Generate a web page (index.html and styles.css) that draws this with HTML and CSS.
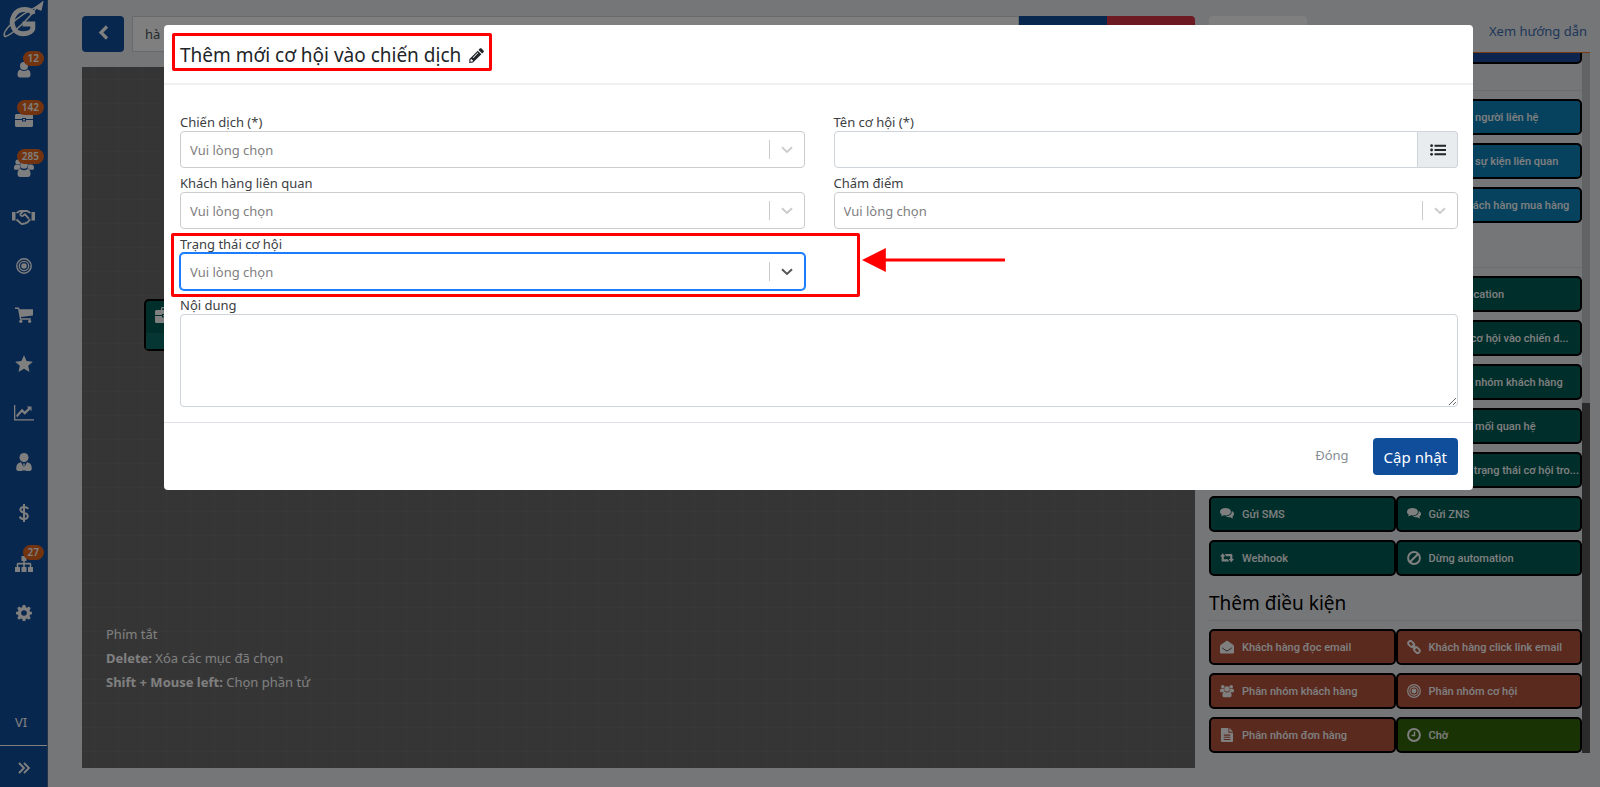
FILE: index.html
```html
<!DOCTYPE html>
<html lang="vi">
<head>
    <meta charset="UTF-8">
    <meta name="viewport" content="width=device-width, initial-scale=1.0">
    <title>Automation</title>
    <link rel="stylesheet" href="styles.css">
</head>
<body>
<svg class="sprite" aria-hidden="true">
    <symbol id="user" viewBox="0 0 16 16"><circle cx="8" cy="4" r="4"/><path d="M4.300 7.500C2.300 8 1.500 10 1.500 12.800c0 1.800 1 2.700 2.500 2.700h8c1.500 0 2.500-.9 2.500-2.700 0-2.800-.8-4.800-2.800-5.300a5.200 5.200 0 0 1-7.400 0z"/></symbol>
    <symbol id="briefcase" viewBox="0 0 18 16"><path d="M6 3V1.500C6 .7 6.500 0 7.500 0h3C11.500 0 12 .7 12 1.500V3h4.500c.8 0 1.500.7 1.500 1.500V8h-7V7H7v1H0V4.500C0 3.700.7 3 1.500 3zm1.300 0h3.400V1.300H7.300zM0 9h7v1.500h4V9h7v5.500c0 .8-.7 1.500-1.500 1.500h-15C.7 16 0 15.300 0 14.500zM8 8h2v1.500H8z"/></symbol>
    <symbol id="users" viewBox="0 0 20 18"><circle cx="4" cy="3" r="2.600"/><circle cx="16" cy="3" r="2.600"/><circle cx="10" cy="6" r="3.800"/><path d="M6 6.200C5 5.800 1.500 5.300.8 6.200.1 7 0 8 0 9.300c0 1 .7 1.500 1.700 1.500h2.600c.6-.8 1.400-1.300 2.300-1.500A4.800 4.800 0 0 1 6 6.200zM14 6.200c1-.4 4.500-.9 5.200 0 .7.800.8 1.800.8 3.100 0 1-.7 1.500-1.700 1.500h-2.600c-.6-.8-1.400-1.300-2.300-1.500.6-.9.800-2 .6-3.100zM6.500 9.700C4.500 10 3.500 12 3.500 15c0 1.900 1 3 2.700 3h7.600c1.700 0 2.700-1.100 2.700-3 0-3-1-5-3-5.300a4.600 4.600 0 0 1-7 0z"/></symbol>
    <symbol id="handshake" viewBox="0 0 23 16"><path d="M0 3h3.500v8.500H0zM19.500 3H23v8.500h-3.500z"/><path d="M4.500 4 8 2h3M4.500 10.500l4.500 4c1 .8 2 .6 2.600 0 1 .5 2 0 2.400-.8 1 .3 2-.3 2.200-1.300l2.300-2M18.500 4 15 2h-3.500L8.500 4.800c-.5 1.500 1 2.800 2.500 2l2-1.500 4 4.500" fill="none" stroke="currentColor" stroke-width="1.800"/></symbol>
    <symbol id="target" viewBox="0 0 16 16"><g fill="none" stroke="currentColor"><circle cx="8" cy="8" r="7.200" stroke-width="1.400"/><circle cx="8" cy="8" r="4.700" stroke-width="1.300"/></g><circle cx="8" cy="8" r="2.800"/></symbol>
    <symbol id="cart" viewBox="0 0 17 16"><path d="M0 1h3.300c.5 0 .7.300.8.800L4.200 2.500H17v6L5.600 10l.2 1H15v1.400H4.700L2.900 2.400H0z"/><circle cx="5.500" cy="14" r="1.500"/><circle cx="13.800" cy="14" r="1.500"/></symbol>
    <symbol id="star" viewBox="0 0 16 16"><path d="m8 .3 2.300 5 5.600.6-4.200 3.700 1.200 5.500L8 12.300l-4.900 2.800 1.200-5.500L.1 5.900l5.600-.6z"/></symbol>
    <symbol id="chart" viewBox="0 0 20 16"><path d="M0 0h1.300v14.300H20v1.300H0z"/><path d="m3 12.500 5-5.500 2.800 2.800L16 4.600l1.500 1.600V1.500h-4.800l1.600 1.600-3.500 3.500L8 3.800l-5.800 6.500z"/></symbol>
    <symbol id="tie" viewBox="0 0 16 18"><circle cx="8" cy="4.500" r="4.500"/><path d="M4 9.500C1.500 10 .2 12 .2 15.500.2 17 1 18 2.500 18h4l.8-4-.8-2L5 9.300zM12 9.500c2.500.500 3.800 2.500 3.800 6 0 1.500-.8 2.500-2.300 2.500h-4l-.8-4 .8-2L11 9.300zM7 10.500h2l-.5 2 .8 4L8 18l-1.300-1.500.8-4z"/></symbol>
    <symbol id="dollar" viewBox="0 0 10 18"><path d="M9 5C8.500 3.500 7 2.900 5 2.900S1.400 4 1.400 5.700C1.400 9.500 8.800 7.800 8.800 12c0 2-1.500 3.100-3.800 3.100S1.200 14.300.8 12.500M5 0v18" fill="none" stroke="currentColor" stroke-width="2"/></symbol>
    <symbol id="sitemap" viewBox="0 0 18 16"><path d="M6.500 0h5v5h-1.700v1.800h5c1 0 1.500.6 1.500 1.500V11H18v5h-5v-5h1.700V8.400H9.800V11h1.700v5h-5v-5h1.700V8.400H3.300V11H5v5H0v-5h1.700V8.300c0-.9.500-1.500 1.500-1.500h5V5H6.500z"/></symbol>
    <symbol id="gear" viewBox="0 0 16 16"><path fill-rule="evenodd" d="M6.700 0h2.600l.5 2.200 1.200.5 2-1.200 1.700 1.800-1.200 1.900.5 1.300 2 .4v2.400l-2 .5-.5 1.200 1.200 2-1.800 1.700-1.900-1.200-1.200.5L9.300 16H6.700l-.5-2-1.200-.5-2 1.200L1.300 13l1.200-2L2 9.800l-2-.5V6.900l2-.4.5-1.300-1.200-1.900L3 1.500l2 1.200 1.200-.5zM8 5.200a2.800 2.800 0 1 0 0 5.600 2.800 2.800 0 0 0 0-5.600z"/></symbol>
    <symbol id="angles" viewBox="0 0 12 12"><path d="m1 1 5 5-5 5m5-10 5 5-5 5" fill="none" stroke="currentColor" stroke-width="1.900"/></symbol>
    <symbol id="back" viewBox="0 0 11 15"><path d="M9 1.500 3 7.500l6 6" fill="none" stroke="currentColor" stroke-width="3.200"/></symbol>
    <symbol id="chat" viewBox="0 0 16 14"><path d="M6.200 0C2.800 0 0 1.900 0 4.400 0 5.800.8 7 2.200 7.800c-.2.700-.7 1.300-1.200 1.800 1.300-.1 2.400-.5 3.300-1.100.6.100 1.200.2 1.900.2 3.500 0 6.300-1.900 6.300-4.300S9.700 0 6.200 0z"/><path d="M13.500 3.500c1.500.8 2.500 2 2.500 3.400 0 1.300-.8 2.400-2 3.200.2.700.7 1.300 1.200 1.900-1.400-.2-2.600-.7-3.500-1.300-2 .3-4-.1-5.400-1 4 0 7.400-2.400 7.200-6.200z"/></symbol>
    <symbol id="retweet" viewBox="0 0 18 12"><path d="M3.500 0 7 4.200H4.900V7.700h5l2 2.800H3.300c-.8 0-1.200-.4-1.200-1.100V4.200H0zM14.500 11.500 11 7.300h2.100V3.800h-5L6.100 1h8.600c.8 0 1.200.4 1.200 1.100v5.200H18z"/></symbol>
    <symbol id="ban" viewBox="0 0 14 14"><path d="M11.300 2.700l-8.600 8.600" stroke="currentColor" stroke-width="2"/><circle cx="7" cy="7" r="5.900" fill="none" stroke="currentColor" stroke-width="2"/></symbol>
    <symbol id="mail" viewBox="0 0 16 15"><path d="M8 0 1 5C.3 5.500 0 6 0 6.700V13.500c0 .8.700 1.500 1.500 1.500h13c.8 0 1.500-.7 1.500-1.500V6.700c0-.7-.3-1.200-1-1.700z"/><path d="m2.500 8.500 4.200 3c.8.500 1.800.5 2.600 0l4.200-3" fill="none" stroke="#5a3a33" stroke-width="1"/></symbol>
    <symbol id="link" viewBox="0 0 15 15"><g fill="none" stroke="currentColor" stroke-width="2"><rect x="1" y="2" width="7" height="4.600" rx="2.200" transform="rotate(45 4.500 4.300)"/><rect x="7" y="8.400" width="7" height="4.600" rx="2.200" transform="rotate(45 10.500 10.700)"/><path d="m5.500 5.500 4 4"/></g></symbol>
    <symbol id="file" viewBox="0 0 13 15"><path fill-rule="evenodd" d="M0 1c0-.6.400-1 1-1h7v5h5v9c0 .6-.4 1-1 1H1c-.6 0-1-.4-1-1zm3 6v1.200h7V7zm0 2.300v1.200h7V9.300zm0 2.400v1.200h7v-1.200zM9 0l4 4H9z"/></symbol>
    <symbol id="clock" viewBox="0 0 14 14"><g fill="none" stroke="currentColor" stroke-width="2"><circle cx="7" cy="7" r="5.900"/><path d="M7.500 3.500v4h-3" stroke-width="1.400"/></g></symbol>
    <symbol id="pencil" viewBox="0 0 16 16"><path fill-rule="evenodd" d="M11.500.6c.6-.6 1.300-.6 1.900 0l2 2c.6.6.6 1.300 0 1.900L14 5.900 10.100 2zM9.300 2.800l3.900 3.900L4.300 15.500.2 15.900l.3-4.200zM1.700 12.300l-.2 2.300 2.300-.2.600-.7-2-2zM9.300 4.800 4 10.100l.6.600 5.300-5.300z"/></symbol>
    <symbol id="list" viewBox="0 0 16 12"><path d="M4.500.7H16v2H4.500zM4.500 5H16v2H4.500zM4.500 9.300H16v2H4.500z"/><circle cx="1.600" cy="1.700" r="1.400"/><circle cx="1.600" cy="6" r="1.400"/><circle cx="1.600" cy="10.300" r="1.400"/></symbol>
    <symbol id="chevron" viewBox="0 0 12 8"><path d="m1 1.300 5 4.700 5-4.700" fill="none" stroke="currentColor" stroke-width="2"/></symbol>
</svg>

<nav class="sidebar">
    <a class="logo" href="#" aria-label="Getfly">
        <svg viewBox="0 0 48 42">
            <path d="M34 14C32 9 20 6 14.500 15c-5 9 0 19 9 19 6 0 9-2 10-5v-5H23" stroke-width="5"/>
            <path d="M5 37C1 32 16 17 38 6 32 16 12 36 5 37" stroke-width="1.500"/>
            <path d="m36 7 8-6-2 9-3-1z" fill="#fff" stroke-width="1"/>
        </svg>
    </a>
    <a class="nav-item" href="#" aria-label="Khách hàng"><svg class="icon-16"><use href="#user"/></svg><span class="badge">12</span></a>
    <a class="nav-item" href="#" aria-label="Công việc"><svg class="icon-18"><use href="#briefcase"/></svg><span class="badge">142</span></a>
    <a class="nav-item" href="#" aria-label="Nhóm"><svg class="icon-20"><use href="#users"/></svg><span class="badge">285</span></a>
    <a class="nav-item" href="#" aria-label="Cơ hội"><svg class="icon-22"><use href="#handshake"/></svg></a>
    <a class="nav-item" href="#" aria-label="Chiến dịch"><svg class="icon-16"><use href="#target"/></svg></a>
    <a class="nav-item" href="#" aria-label="Đơn hàng"><svg class="icon-18"><use href="#cart"/></svg></a>
    <a class="nav-item" href="#" aria-label="KPI"><svg class="icon-18"><use href="#star"/></svg></a>
    <a class="nav-item" href="#" aria-label="Báo cáo"><svg class="icon-20"><use href="#chart"/></svg></a>
    <a class="nav-item" href="#" aria-label="Nhân sự"><svg class="icon-18"><use href="#tie"/></svg></a>
    <a class="nav-item tall" href="#" aria-label="Tài chính"><svg class="icon-18"><use href="#dollar"/></svg></a>
    <a class="nav-item" href="#" aria-label="Phòng ban"><svg class="icon-18"><use href="#sitemap"/></svg><span class="badge">27</span></a>
    <a class="nav-item" href="#" aria-label="Cài đặt"><svg class="icon-16"><use href="#gear"/></svg></a>
    <a class="lang" href="#">VI</a>
    <button class="expand" aria-label="Mở rộng"><svg class="icon-12"><use href="#angles"/></svg></button>
</nav>

<main class="page">
    <section class="workspace">
        <div class="toolbar">
            <button class="back" aria-label="Quay lại"><svg class="icon-15"><use href="#back"/></svg></button>
            <div class="name-group">
                <input class="flow-name" type="text" value="hà test" aria-label="Tên automation">
                <button class="save" aria-label="Lưu"></button>
                <button class="remove" aria-label="Xóa"></button>
            </div>
        </div>
        <div class="canvas">
            <div class="node">
                <svg class="icon-18"><use href="#briefcase"/></svg>
                <div class="node-foot"></div>
            </div>
            <div class="shortcuts">
                <p>Phím tắt</p>
                <p><b>Delete:</b> Xóa các mục đã chọn</p>
                <p><b>Shift + Mouse left:</b> Chọn phần tử</p>
            </div>
        </div>
    </section>

    <aside class="side">
        <div class="side-top">
            <button class="tab" aria-label="Thành phần"></button>
            <a class="guide" href="#">Xem hướng dẫn</a>
        </div>
        <div class="palette">
            <div class="groups">
                <div class="cards">
                    <button class="card navy"></button><button class="card navy"></button>
                </div>
                <h2 class="empty"></h2>
                <div class="cards">
                    <button class="card blue"></button>
                    <button class="card blue"><svg><use href="#user"/></svg><span>Cập nhật người liên hệ</span></button>
                    <button class="card blue"></button>
                    <button class="card blue"><svg><use href="#target"/></svg><span>Cập nhật sự kiện liên quan</span></button>
                    <button class="card blue"></button>
                    <button class="card blue"><svg><use href="#cart"/></svg><span>Nhóm khách hàng mua hàng</span></button>
                </div>
                <h2>Thêm hành động</h2>
                <div class="cards">
                    <button class="card teal"></button>
                    <button class="card teal"><svg><use href="#chat"/></svg><span>Gửi notification</span></button>
                    <button class="card teal"></button>
                    <button class="card teal"><svg><use href="#target"/></svg><span>Tạo mới cơ hội vào chiến d...</span></button>
                    <button class="card teal"></button>
                    <button class="card teal"><svg><use href="#users"/></svg><span>Cập nhật nhóm khách hàng</span></button>
                    <button class="card teal"></button>
                    <button class="card teal"><svg><use href="#user"/></svg><span>Cập nhật mối quan hệ</span></button>
                    <button class="card teal"></button>
                    <button class="card teal"><svg><use href="#target"/></svg><span>Thay đổi trạng thái cơ hội tro...</span></button>
                    <button class="card teal"><svg><use href="#chat"/></svg><span>Gửi SMS</span></button>
                    <button class="card teal"><svg><use href="#chat"/></svg><span>Gửi ZNS</span></button>
                    <button class="card teal"><svg><use href="#retweet"/></svg><span>Webhook</span></button>
                    <button class="card teal"><svg><use href="#ban"/></svg><span>Dừng automation</span></button>
                </div>
                <h2>Thêm điều kiện</h2>
                <div class="cards">
                    <button class="card brown"><svg><use href="#mail"/></svg><span>Khách hàng đọc email</span></button>
                    <button class="card brown"><svg><use href="#link"/></svg><span>Khách hàng click link email</span></button>
                    <button class="card brown"><svg><use href="#users"/></svg><span>Phân nhóm khách hàng</span></button>
                    <button class="card brown"><svg><use href="#target"/></svg><span>Phân nhóm cơ hội</span></button>
                    <button class="card brown"><svg><use href="#file"/></svg><span>Phân nhóm đơn hàng</span></button>
                    <button class="card green"><svg><use href="#clock"/></svg><span>Chờ</span></button>
                </div>
            </div>
            <div class="scrollbar"><div class="thumb"></div></div>
        </div>
    </aside>
</main>

<div class="overlay">
    <form class="modal" role="dialog" aria-labelledby="modal-title">
        <header class="modal-header">
            <div class="title-wrap">
                <h1 id="modal-title">Thêm mới cơ hội vào chiến dịch</h1>
                <svg class="icon-15"><use href="#pencil"/></svg>
                <div class="mark mark-title"></div>
            </div>
        </header>
        <div class="modal-body">
            <div class="field">
                <label for="campaign">Chiến dịch (*)</label>
                <div class="select">
                    <select id="campaign"><option>Vui lòng chọn</option></select>
                    <svg><use href="#chevron"/></svg>
                </div>
            </div>
            <div class="field">
                <label for="name">Tên cơ hội (*)</label>
                <div class="input-group">
                    <input id="name" type="text">
                    <button type="button" aria-label="Chọn trường"><svg class="icon-16"><use href="#list"/></svg></button>
                </div>
            </div>
            <div class="field">
                <label for="customer">Khách hàng liên quan</label>
                <div class="select">
                    <select id="customer"><option>Vui lòng chọn</option></select>
                    <svg><use href="#chevron"/></svg>
                </div>
            </div>
            <div class="field">
                <label for="score">Chấm điểm</label>
                <div class="select">
                    <select id="score"><option>Vui lòng chọn</option></select>
                    <svg><use href="#chevron"/></svg>
                </div>
            </div>
            <div class="field status">
                <label for="status">Trạng thái cơ hội</label>
                <div class="select active">
                    <select id="status"><option>Vui lòng chọn</option></select>
                    <svg><use href="#chevron"/></svg>
                </div>
                <div class="mark mark-status"></div>
                <svg class="arrow" viewBox="0 0 144 24"><path d="M0 12 24 0v24z"/><path d="M20 10.500h124v3H20z"/></svg>
            </div>
            <div class="field wide">
                <label for="content">Nội dung</label>
                <textarea id="content"></textarea>
            </div>
        </div>
        <footer class="modal-footer">
            <button type="button" class="close">Đóng</button>
            <button type="button" class="update">Cập nhật</button>
        </footer>
    </form>
</div>
</body>
</html>
```
FILE: styles.css
```css
* {
    box-sizing: border-box;
}
body {
    margin: 0;
    display: flex;
    height: 100vh;
    overflow: hidden;
    background-color: #ebedf0;
    color: #212529;
    font-family: "Noto Sans", "Open Sans", sans-serif;
    font-size: 13px;
}
button, input, select, textarea {
    font: inherit;
    margin: 0;
}
button {
    border: none;
    padding: 0;
    cursor: pointer;
}
a {
    text-decoration: none;
}
svg {
    fill: currentColor;
    flex: none;
}
.sprite {
    display: none;
}
.icon-12 { width: 12px; height: 12px; }
.icon-15 { width: 15px; height: 15px; }
.icon-16 { width: 16px; height: 16px; }
.icon-18 { width: 18px; height: 18px; }
.icon-20 { width: 20px; height: 18px; }
.icon-22 { width: 23px; height: 16px; }

/* sidebar */
.sidebar {
    width: 48px;
    flex: none;
    display: flex;
    flex-direction: column;
    background-color: #104e9c;
    color: #fff;
    border-right: 1px solid #44688f;
}
.logo {
    height: 45px;
}
.logo svg {
    width: 47px;
    height: 42px;
    fill: none;
    stroke: #fff;
}
.nav-item {
    position: relative;
    height: 49px;
    display: flex;
    align-items: center;
    justify-content: center;
    color: #fff;
}
.nav-item.tall {
    height: 53px;
}
.badge {
    position: absolute;
    top: 6px;
    right: 3px;
    padding: 0 5px;
    border-radius: 8px;
    background-color: #e4661c;
    font-size: 10px;
    font-weight: 600;
    line-height: 15px;
}
.lang {
    margin-top: auto;
    padding: 0 15px 13px;
    line-height: 20px;
    color: #fff;
}
.expand {
    height: 42px;
    border-top: 1px solid #fff;
    background: none;
    color: #fff;
    padding-top: 5px;
}

/* page */
.page {
    flex: 1;
    min-width: 0;
    display: grid;
    grid-template-columns: minmax(0, 1fr) 381px;
    gap: 14px;
    padding: 16px 10px 0 34px;
}
.workspace {
    display: flex;
    flex-direction: column;
    gap: 15px;
    padding-bottom: 19px;
}
.toolbar {
    display: flex;
    gap: 8px;
}
.back {
    width: 42px;
    height: 36px;
    border-radius: 4px;
    background-color: #104e9c;
    color: #fff;
}
.name-group {
    flex: 1;
    display: flex;
}
.flow-name {
    flex: 1;
    border: 1px solid #ced4da;
    padding: 0 12px;
    color: #495057;
}
.save, .remove {
    width: 88px;
    background-color: #104e9c;
}
.remove {
    background-color: #dc3545;
    border-radius: 0 4px 4px 0;
}
.canvas {
    flex: 1;
    position: relative;
    background-color: #6a6a6a;
    background-image: linear-gradient(90deg, #717171 1px, transparent 1px), linear-gradient(#717171 1px, transparent 1px);
    background-size: 24px 24px;
    background-position: 12px 12px;
}
.node {
    position: absolute;
    left: 62px;
    top: 232px;
    width: 180px;
    height: 52px;
    border: 2px solid #000;
    border-radius: 5px;
    background-color: #005c56;
    color: #fff;
    padding: 5px 9px;
}
.node-foot {
    position: absolute;
    left: 0;
    right: 0;
    bottom: 0;
    height: 16px;
    background-color: #0c6d66;
}
.shortcuts {
    position: absolute;
    left: 24px;
    bottom: 74px;
    color: #fff;
}
.shortcuts p {
    margin: 0;
    line-height: 24px;
}

/* palette */
.side {
    display: flex;
    flex-direction: column;
    padding-bottom: 34px;
    min-height: 0;
}
.side-top {
    display: flex;
    justify-content: space-between;
    align-items: flex-start;
    height: 36px;
    flex: none;
}
.tab {
    width: 98px;
    height: 36px;
    background-color: #fff;
    border-radius: 4px 4px 0 0;
}
.guide {
    color: #3c6cb0;
    line-height: 30px;
    padding-right: 3px;
}
.palette {
    flex: 1;
    min-height: 0;
    display: flex;
    border-top: 1px solid #f37021;
}
.groups {
    flex: 1;
    min-width: 0;
    display: flex;
    flex-direction: column;
    justify-content: flex-end;
    overflow: hidden;
}
.groups h2 {
    margin: 9px 0 8px;
    height: 36px;
    flex: none;
    border-bottom: 1px solid #d8dadc;
    color: #000;
    font-size: 19px;
    font-weight: 400;
    line-height: 36px;
}
.groups .empty {
    margin-top: -9px;
}
.cards {
    display: grid;
    grid-template-columns: 1fr 1fr;
    row-gap: 8px;
    flex: none;
}
.card {
    min-width: 0;
    height: 36px;
    display: flex;
    align-items: center;
    gap: 8px;
    padding: 0 4px 0 9px;
    border: 2px solid #000;
    border-radius: 5px;
    color: #fff;
    font-family: Roboto, "Liberation Sans", sans-serif;
    font-size: 11px;
    font-weight: 500;
}
.card svg {
    width: 14px;
    height: 14px;
}
.card span {
    padding-top: 2px;
    white-space: nowrap;
    line-height: 18px;
}
.navy { background-color: #1a4a9c; }
.blue { background-color: #0c84bc; }
.teal { background-color: #005c56; }
.brown { background-color: #b4543e; }
.green { background-color: #34660a; }
.scrollbar {
    width: 8px;
    display: flex;
    flex-direction: column;
    justify-content: flex-end;
    background-color: #c4c6c8;
}
.thumb {
    height: 50%;
    background-color: #545454;
}

/* modal */
.overlay {
    position: fixed;
    inset: 0;
    padding: 25px 127px 0 164px;
    background-color: rgba(0, 0, 0, 0.5);
}
.modal {
    background-color: #fff;
    border-radius: 4px;
}
.modal-header {
    display: flex;
    padding: 16px 16px 14px;
    border-bottom: 2px solid #f0f0f0;
}
.title-wrap {
    position: relative;
    display: flex;
    align-items: center;
    gap: 8px;
}
.modal-header h1 {
    margin: 0;
    font-size: 19px;
    font-weight: 400;
    line-height: 28px;
}
.mark {
    position: absolute;
    border: 3px solid #f00;
    border-radius: 2px;
    pointer-events: none;
}
.mark-title {
    inset: -8px -8px -2px -8px;
}
.modal-body {
    display: grid;
    grid-template-columns: 1fr 1fr;
    gap: 6px 29px;
    padding: 28px 15px 15px 16px;
}
.field {
    display: flex;
    flex-direction: column;
    min-width: 0;
}
.field label {
    color: #3c4043;
    line-height: 18px;
}
.wide {
    grid-column: 1 / -1;
}
.status {
    grid-column: 1;
    position: relative;
}
.select {
    position: relative;
}
.select::after {
    content: "";
    position: absolute;
    right: 35px;
    top: 9px;
    bottom: 9px;
    border-left: 1px solid #ccc;
}
.select select {
    width: 100%;
    height: 37px;
    appearance: none;
    border: 1px solid #ccc;
    border-radius: 4px;
    background-color: #fff;
    color: #808080;
    padding: 0 9px;
}
.select svg {
    position: absolute;
    right: 12px;
    top: 15px;
    width: 12px;
    height: 8px;
    color: #ccc;
}
.select.active select {
    border-color: #1a7cff;
    box-shadow: 0 0 0 1px #1a7cff;
}
.select.active svg {
    color: #555;
}
.input-group {
    display: flex;
}
.input-group input {
    flex: 1;
    min-width: 0;
    height: 37px;
    border: 1px solid #ced4da;
    border-radius: 4px 0 0 4px;
    padding: 0 10px;
}
.input-group button {
    width: 40px;
    border: 1px solid #ced4da;
    border-left: none;
    border-radius: 0 4px 4px 0;
    background-color: #e9ecef;
    color: #212529;
    display: flex;
    align-items: center;
    justify-content: center;
}
.mark-status {
    inset: -2px -55px -7px -9px;
}
.arrow {
    position: absolute;
    left: calc(100% + 57px);
    top: 13px;
    width: 143px;
    height: 24px;
    color: #f00;
}
textarea {
    height: 93px;
    border: 1px solid #ced4da;
    border-radius: 4px;
    resize: vertical;
    display: block;
}
.modal-footer {
    display: flex;
    justify-content: flex-end;
    align-items: center;
    gap: 24px;
    padding: 15px 15px 15px 16px;
    border-top: 1px solid #dee2e6;
}
.close {
    background: none;
    color: #868e96;
    padding-bottom: 4px;
}
.update {
    height: 37px;
    padding: 0 11px;
    border-radius: 4px;
    background-color: #104e9c;
    color: #fff;
    font-size: 15px;
}
```
